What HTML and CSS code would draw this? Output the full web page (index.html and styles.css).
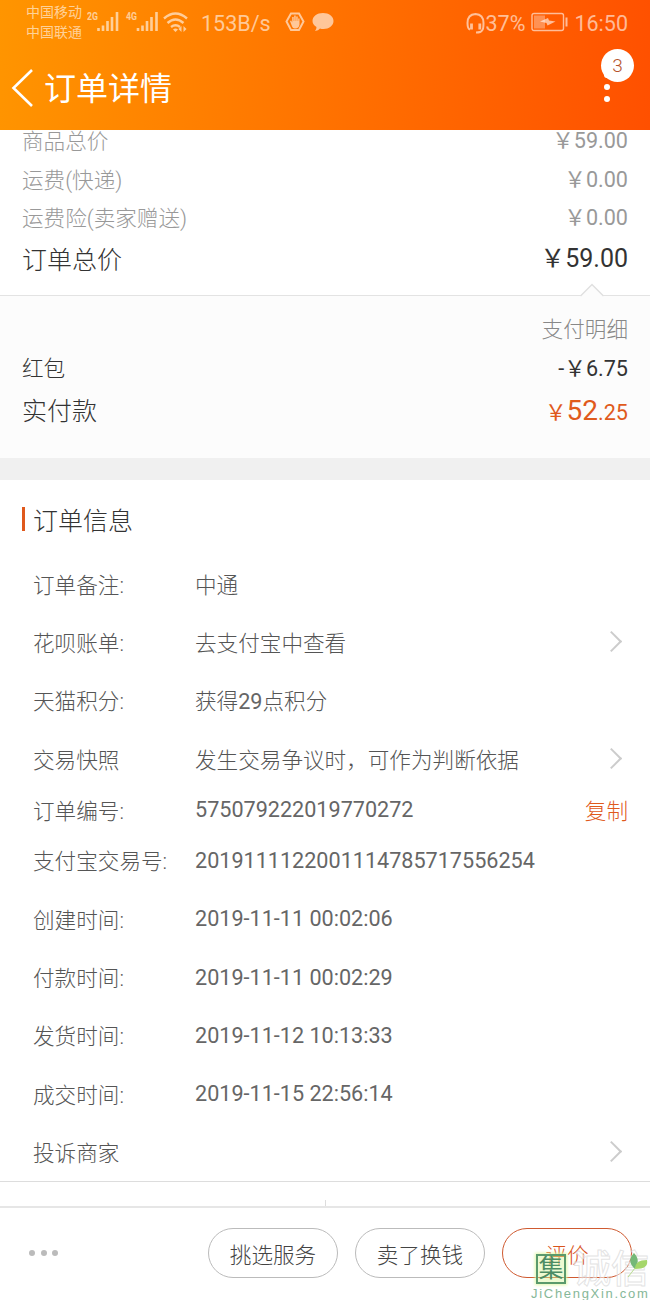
FILE: index.html
```html
<!DOCTYPE html>
<html lang="zh-CN">
<head>
  <meta charset="utf-8">
  <title>订单详情</title>
  <link rel="stylesheet" href="styles.css">
</head>
<body>
  <header class="header">
    <div class="status-bar">
      <div class="carriers"><span>中国移动</span><span>中国联通</span></div>
      <svg class="signals" width="104" height="24" viewBox="0 0 104 24" fill="none" stroke="currentColor">
        <g stroke-width="2.6">
          <path d="M11.500 22v-3M16 22v-5.500M20.500 22v-10M25 22v-14M30 22v-19"/>
          <path d="M51 22v-3M55.500 22v-5.500M60 22v-10M64.500 22v-14M69.500 22v-19"/>
        </g>
        <text class="net" x="0" y="11" textLength="11" lengthAdjust="spacingAndGlyphs">2G</text>
        <text class="net" x="39" y="11" textLength="11" lengthAdjust="spacingAndGlyphs">4G</text>
        <path stroke-width="2.400" d="M77 9.500q11.500-10 23 0M80.500 14q8-7 16 0M84 18q4.500-3.500 9 0"/>
        <path fill="currentColor" stroke="none" d="M86 20.500q2.500-2 5 0l-2.500 2.500zM94.500 17l-3 3 3 3zM96.500 17l3 3-3 3z"/>
      </svg>
      <span class="speed">153B/s</span>
      <svg class="notices" width="50" height="22" viewBox="0 0 50 22">
        <path fill="none" stroke="currentColor" stroke-width="2" d="M6 2.500h8l4.500 8-4.500 8.500H6l-4.500-8.500z"/>
        <path fill="currentColor" d="M5 10l1.200-.4 1 2V6h1.500v4h.5V4.500h1.500V10h.5V5.500h1.500V10h.5V7.500h1.300v6q-.5 4-4.500 4-2.500 0-3.500-3.500z"/>
        <path fill="currentColor" d="M38 2c6 0 10.500 3.300 10.500 8s-4.500 8-10 8q-2 0-3.500-.5-1.500 2-5 2.500 1.500-1.500 1.500-4-4-2.500-4-6C27.500 5.300 32 2 38 2z"/>
      </svg>
      <div class="status-right">
        <svg width="20" height="22" viewBox="0 0 20 22" fill="none" stroke="currentColor">
          <path stroke-width="2" d="M4 17.500Q1.500 17 1.500 11q0-8.500 8-9 8 .5 8 9 0 6.500-1.500 7.500-1 2-6 2"/>
          <path stroke-width="2.800" d="M5.500 11.500v6M13.800 11.500v6"/>
        </svg>
        <span>37%</span>
        <svg class="battery" width="37" height="20" viewBox="0 0 37 20">
          <rect x="1" y="1.500" width="31.500" height="17" rx="2" fill="none" stroke="currentColor" stroke-width="1.400"/>
          <path fill="currentColor" opacity=".55" d="M3 3.500h11v13H3z"/>
          <path fill="currentColor" d="M9 9.500l8-3.500 1 2.500 6.500 1-8 4-1-2.500zM34.500 5.500h2v9h-2z"/>
        </svg>
        <span>16:50</span>
      </div>
    </div>
    <div class="nav">
      <svg class="back" width="24" height="40" viewBox="0 0 24 40"><path d="M21 2L2.500 20 21 38"/></svg>
      <h1>订单详情</h1>
      <div class="more"><i></i><i></i><i></i><span class="badge">3</span></div>
    </div>
  </header>

  <main class="content">
    <section class="summary">
      <div class="line"><span>商品总价</span><em>￥59.00</em></div>
      <div class="line"><span>运费(快递)</span><em>￥0.00</em></div>
      <div class="line"><span>运费险(卖家赠送)</span><em>￥0.00</em></div>
      <div class="line total"><span>订单总价</span><em>￥59.00</em></div>
    </section>
    <section class="payment">
      <svg class="arrow" width="24" height="14" viewBox="0 0 24 14"><path d="M.5 13L12 1.500 23.500 13"/></svg>
      <p class="pay-title">支付明细</p>
      <div class="line"><span>红包</span><em>-￥6.75</em></div>
      <div class="line paid"><span>实付款</span><em>￥<b>52</b>.25</em></div>
    </section>
    <section class="info">
      <h2>订单信息</h2>
      <dl>
        <div class="row"><dt>订单备注:</dt><dd>中通</dd></div>
        <div class="row link"><dt>花呗账单:</dt><dd>去支付宝中查看</dd></div>
        <div class="row"><dt>天猫积分:</dt><dd>获得<span class="num">29</span>点积分</dd></div>
        <div class="row link"><dt>交易快照</dt><dd>发生交易争议时，可作为判断依据</dd></div>
        <div class="row short"><dt>订单编号:</dt><dd class="num">575079222019770272</dd><a class="copy">复制</a></div>
        <div class="row"><dt>支付宝交易号:</dt><dd class="num">2019111122001114785717556254</dd></div>
        <div class="row"><dt>创建时间:</dt><dd class="num">2019-11-11 00:02:06</dd></div>
        <div class="row"><dt>付款时间:</dt><dd class="num">2019-11-11 00:02:29</dd></div>
        <div class="row"><dt>发货时间:</dt><dd class="num">2019-11-12 10:13:33</dd></div>
        <div class="row"><dt>成交时间:</dt><dd class="num">2019-11-15 22:56:14</dd></div>
        <div class="row link"><dt>投诉商家</dt><dd></dd></div>
      </dl>
    </section>
    <div class="contact"><i></i></div>
  </main>

  <footer class="footer">
    <div class="dots"><i></i><i></i><i></i></div>
    <button>挑选服务</button>
    <button>卖了换钱</button>
    <button class="primary">评价</button>
    <div class="watermark">
      <div class="mark-top">
        <span class="seal">集</span><span class="ghost">诚信</span>
        <svg class="leaf" width="22" height="28" viewBox="0 0 22 28">
          <path fill="#74b878" d="M8 17Q-1 9 7 1q7 7 1 16z"/>
          <path fill="#a5d66a" d="M8 17q0-9 12-9 2 9-12 9z"/>
          <path fill="none" stroke="#b5dc8c" d="M8 16q-3 4-7 9"/>
        </svg>
      </div>
      <div class="site">JiChengXin.com</div>
    </div>
  </footer>
</body>
</html>
```

FILE: styles.css
```css
* {
  box-sizing: border-box;
}

body {
  margin: 0;
  height: 1300px;
  display: flex;
  flex-direction: column;
  overflow: hidden;
  background: #fff;
  color: #555;
  font-family: Roboto, "Noto Sans CJK SC", sans-serif;
  font-size: 21.6px;
  font-weight: 300;
}

h1, h2, p, dl, dd {
  margin: 0;
  font-weight: 300;
}

em {
  font-style: normal;
  font-weight: 400;
}

svg {
  display: block;
  flex-shrink: 0;
}

.num {
  color: #666;
  font-weight: 400;
}

/* header */
.header {
  height: 130px;
  flex-shrink: 0;
  background: linear-gradient(95deg, #ff9500, #ff5000);
  color: #fff;
}

.status-bar {
  height: 46px;
  display: flex;
  align-items: center;
  padding: 0 22px 0 26px;
  color: rgba(255, 255, 255, 0.6);
  font-size: 21.5px;
  font-weight: 400;
}

.carriers {
  display: flex;
  flex-direction: column;
  width: 61px;
  font-size: 14px;
  line-height: 20px;
  margin-top: -2px;
}

.signals {
  margin-bottom: 4px;
}

.net {
  font-size: 11.5px;
  font-weight: 700;
  fill: currentColor;
  stroke: none;
}

.speed {
  width: 84px;
  margin-left: 10px;
}

.notices {
  margin-bottom: 2px;
}

.status-right {
  display: flex;
  align-items: center;
  margin-left: auto;
}

.battery {
  margin: 0 6px 2px;
}

.nav {
  height: 84px;
  display: flex;
  align-items: center;
  padding: 0 22px 0 11px;
}

.back path {
  fill: none;
  stroke: #fff;
  stroke-width: 2.6;
}

.nav h1 {
  margin-left: 9px;
  padding-top: 2px;
  font-size: 32px;
  font-weight: 400;
  line-height: 40px;
}

.more {
  position: relative;
  width: 42px;
  margin-left: auto;
  display: flex;
  flex-direction: column;
  align-items: center;
  gap: 6px;
  padding-bottom: 2px;
}

.more i {
  width: 6px;
  height: 6px;
  border-radius: 50%;
  background: #fff;
}

.badge {
  position: absolute;
  top: -23px;
  right: -6px;
  width: 33px;
  height: 33px;
  border-radius: 50%;
  background: #fff;
  color: #b5532a;
  font-size: 19px;
  line-height: 33px;
  text-align: center;
}

/* amounts */
.content {
  flex: 1;
  overflow: hidden;
}

.line {
  display: flex;
  justify-content: space-between;
  height: 38.5px;
  line-height: 38.5px;
}

.summary {
  display: flow-root;
  height: 165px;
  padding: 0 22px;
  color: #999;
}

.summary .line:first-child {
  margin-top: -8px;
}

.summary .line span {
  padding-top: 1px;
}

.total {
  height: 44px;
  line-height: 44px;
  color: #333;
  font-size: 25px;
}

.total em {
  margin-top: -1px;
}

.payment {
  position: relative;
  height: 163px;
  padding: 15px 22px 0;
  border-top: 1px solid #e3e3e3;
  background: #fcfcfc;
  color: #333;
}

.arrow {
  position: absolute;
  top: -13px;
  right: 46px;
}

.arrow path {
  fill: #fcfcfc;
  stroke: #e0e0e0;
  stroke-width: 1.5;
}

.pay-title {
  line-height: 38.5px;
  text-align: right;
  color: #888;
}

.paid {
  height: 46px;
  line-height: 46px;
  font-size: 25px;
}

.paid span {
  padding-top: 1px;
}

.paid em {
  color: #e05a1c;
  font-size: 21.6px;
}

.paid b {
  font-size: 28px;
  font-weight: 400;
}

/* order info */
.info {
  border-top: 22px solid #f0f0f0;
  border-bottom: 1px solid #ddd;
  padding: 0 22px;
}

.info h2 {
  display: flex;
  align-items: center;
  height: 74px;
  padding-top: 4px;
  color: #333;
  font-size: 25px;
}

.info h2::before {
  content: "";
  width: 3px;
  height: 24px;
  margin-right: 8px;
  background: #e0591c;
}

.row {
  display: flex;
  align-items: center;
  height: 58.4px;
  padding-left: 11px;
}

.row.short {
  height: 43px;
}

.row dt {
  width: 162px;
}

.row dd {
  flex: 1;
}

.row dd.num {
  padding-top: 1px;
}

.row.link::after {
  content: "";
  width: 13px;
  height: 13px;
  margin-right: 9px;
  border: solid #ccc;
  border-width: 2px 2px 0 0;
  transform: rotate(45deg);
}

.copy {
  color: #e0591c;
}

.contact {
  height: 25px;
  display: flex;
  align-items: flex-end;
  justify-content: center;
}

.contact i {
  width: 1px;
  height: 7px;
  background: #ddd;
}

/* bottom bar */
.footer {
  position: relative;
  height: 94px;
  flex-shrink: 0;
  display: flex;
  align-items: center;
  gap: 17px;
  padding: 0 18px 2px 29px;
  border-top: 2px solid #e6e6e6;
  background: #fff;
}

.dots {
  display: flex;
  gap: 5.5px;
  margin-right: auto;
}

.dots i {
  width: 6px;
  height: 6px;
  border-radius: 50%;
  background: #bbb;
}

.footer button {
  width: 130px;
  height: 50px;
  padding: 0;
  border: 1px solid #bbb;
  border-radius: 25px;
  background: #fff;
  color: #444;
  font: inherit;
}

.footer .primary {
  border: 1.5px solid #cf5a30;
  color: #d9541c;
}

.watermark {
  position: absolute;
  left: 531px;
  bottom: -1px;
  width: 119px;
}

.mark-top {
  display: flex;
  align-items: center;
  height: 34px;
}

.seal {
  width: 30px;
  height: 30px;
  margin-left: 5px;
  border: 2px solid #5a9a6c;
  background: rgba(215, 245, 155, 0.45);
  box-shadow: 0 0 3px 1px #e0f7a8;
  color: #4c8c64;
  font-size: 25px;
  font-weight: 400;
  line-height: 25px;
  text-align: center;
}

.ghost {
  margin-left: 7px;
  color: rgba(255, 255, 255, 0.5);
  font-size: 38px;
  font-weight: 500;
  line-height: 34px;
  white-space: nowrap;
  -webkit-text-stroke: 1px rgba(215, 215, 215, 0.7);
}

.leaf {
  position: absolute;
  right: 1px;
  top: 0;
}

.site {
  height: 15px;
  color: #86b798;
  font-family: "Liberation Sans", sans-serif;
  font-size: 13px;
  font-weight: 400;
  line-height: 15px;
  letter-spacing: 1.7px;
}
```
